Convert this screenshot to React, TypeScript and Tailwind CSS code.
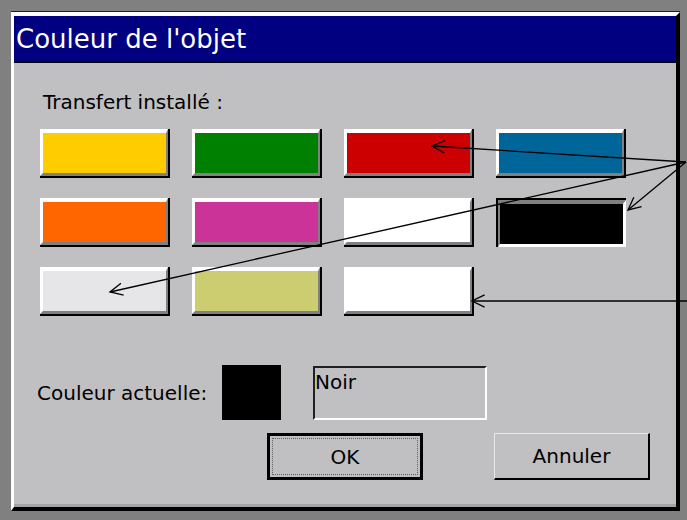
import React from "react";

type Swatch = { color: string; selected?: boolean };

const rows: Swatch[][] = [
  [{ color: "#ffcc00" }, { color: "#008000" }, { color: "#cc0000" }, { color: "#006699" }],
  [{ color: "#ff6600" }, { color: "#cc3399" }, { color: "#ffffff" }, { color: "#000000", selected: true }],
  [{ color: "#e6e5e8" }, { color: "#cccc70" }, { color: "#ffffff" }],
];

// pointer lines drawn over the dialog: [fromX, fromY, tipX, tipY]
const arrows: [number, number, number, number][] = [
  [686, 162, 432, 146],
  [686, 162, 628, 210],
  [686, 162, 110, 292],
  [687, 301, 472, 301],
];

function arrowHead(x1: number, y1: number, x2: number, y2: number) {
  const a = Math.atan2(y1 - y2, x1 - x2);
  const len = 14;
  const spread = 0.45;
  const p1 = [x2 + len * Math.cos(a + spread), y2 + len * Math.sin(a + spread)];
  const p2 = [x2 + len * Math.cos(a - spread), y2 + len * Math.sin(a - spread)];
  return `${p1[0]},${p1[1]} ${x2},${y2} ${p2[0]},${p2[1]}`;
}

function ColorButton({ color, selected }: Swatch) {
  if (selected) {
    return (
      <div className="w-[130px] h-[49px] border-t-2 border-l-2 border-black">
        <div className="w-full h-full border-t-[4px] border-l-[2px] border-[#808080] border-r-[3px] border-b-[3px] border-r-white border-b-white">
          <div className="w-full h-full" style={{ backgroundColor: color }} />
        </div>
      </div>
    );
  }
  return (
    <div className="w-[130px] h-[49px] border-r-2 border-b-2 border-black">
      <div className="w-full h-full border-t-[4px] border-l-[3px] border-white border-r-2 border-b-[3px] border-r-[#808080] border-b-[#808080]">
        <div className="w-full h-full" style={{ backgroundColor: color }} />
      </div>
    </div>
  );
}

export default function App() {
  return (
    <div className="relative w-[687px] h-[520px] bg-[#808080] pt-[11px] pl-[11px] font-['DejaVu_Sans',sans-serif] text-black overflow-hidden">
      <div className="w-[669px] border-t border-[#202020]">
        <div className="border-t-[4px] border-l-[3px] border-white border-r-[4px] border-b-[4px] border-r-black border-b-black">
          {/* Title bar */}
          <div className="h-[47px] bg-[#000080] border-b-2 border-black flex items-center pl-[2px]">
            <span className="text-white text-[26px] leading-none">Couleur de l'objet</span>
          </div>

          {/* Body */}
          <div className="h-[444px] bg-[#c0bfc1] border-b-[3px] border-[#a4a4a4] flex flex-col">
            <div className="mt-[27px] ml-[29px] text-[20px] leading-[24px]">Transfert installé :</div>

            <div className="mt-[15px] ml-[26px] flex flex-col gap-[20px]">
              {rows.map((row, i) => (
                <div key={i} className="flex gap-[22px]">
                  {row.map((s, j) => (
                    <ColorButton key={j} {...s} />
                  ))}
                </div>
              ))}
            </div>

            {/* Current colour */}
            <div className="mt-[49px] ml-[23px] flex items-center">
              <div className="w-[185px] text-[20px] leading-[24px]">Couleur actuelle:</div>
              <div className="w-[59px] h-[55px] bg-black" />
              <div className="ml-[32px] w-[174px] h-[54px] border-t-2 border-l-2 border-[#202020] border-r-2 border-b-2 border-r-white border-b-white">
                <div className="pt-[2px] text-[20px] leading-[24px]">Noir</div>
              </div>
            </div>

            {/* Buttons */}
            <div className="mt-[13px] ml-[253px] flex gap-[71px]">
              <button className="w-[156px] h-[47px] border-[3px] border-black bg-[#c0bfc1] p-[2px]">
                <div className="w-full h-full border border-dotted border-[#606060] flex items-center justify-center text-[20px]">
                  OK
                </div>
              </button>
              <button className="w-[156px] h-[47px] border-t border-l border-[#e8e8e8] border-r-2 border-b-2 border-r-black border-b-black bg-[#c0bfc1] flex items-center justify-center text-[20px]">
                Annuler
              </button>
            </div>
          </div>
        </div>
      </div>

      <svg className="absolute inset-0 pointer-events-none" width="687" height="520">
        {arrows.map(([x1, y1, x2, y2], i) => (
          <g key={i} stroke="#000" strokeWidth="1.3" fill="none">
            <line x1={x1} y1={y1} x2={x2} y2={y2} />
            <polyline points={arrowHead(x1, y1, x2, y2)} />
          </g>
        ))}
      </svg>
    </div>
  );
}
